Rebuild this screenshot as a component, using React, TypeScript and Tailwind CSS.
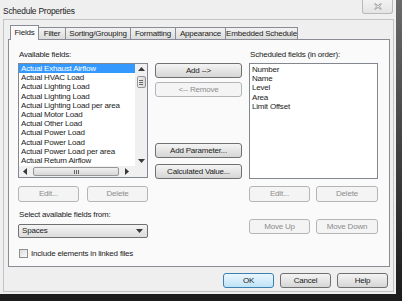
import React from 'react';

const leftFields = [
  'Actual Exhaust Airflow',
  'Actual HVAC Load',
  'Actual Lighting Load',
  'Actual Lighting Load',
  'Actual Lighting Load per area',
  'Actual Motor Load',
  'Actual Other Load',
  'Actual Power Load',
  'Actual Power Load',
  'Actual Power Load per area',
  'Actual Return Airflow',
];

const scheduled = ['Number', 'Name', 'Level', 'Area', 'Limit Offset'];

const tabs = [
  { label: 'Fields', w: 'w-[29px]', active: true },
  { label: 'Filter', w: 'w-[28px]' },
  { label: 'Sorting/Grouping', w: 'w-[66px]' },
  { label: 'Formatting', w: 'w-[46px]' },
  { label: 'Appearance', w: 'w-[51px]' },
  { label: 'Embedded Schedule', w: 'w-[73px]' },
];

interface BtnProps {
  label: string;
  className?: string;
  disabled?: boolean;
  primary?: boolean;
}

const Btn = ({ label, className = '', disabled, primary }: BtnProps) => {
  let look = 'border-[#707070] bg-linear-to-b from-[#f4f4f4] to-[#d6d6d6] text-[#1b1b1b]';
  if (disabled) look = 'border-[#b3b6b8] bg-[#f4f4f4] text-[#8c8c8c]';
  if (primary) look = 'border-[#3c7fb1] bg-linear-to-b from-[#eaf6fd] to-[#bfe3f7] text-[#1b1b1b]';
  return (
    <div className={`flex items-center justify-center rounded-[3px] border ${look} ${className}`}>
      {label}
    </div>
  );
};

const Arrow = ({ dir }: { dir: 'up' | 'down' | 'left' | 'right' }) => {
  const pts = {
    up: '0,4 3.5,0 7,4',
    down: '0,0 3.5,4 7,0',
    left: '4,0 0,3.5 4,7',
    right: '0,0 4,3.5 0,7',
  }[dir];
  const vertical = dir === 'up' || dir === 'down';
  return (
    <svg width={vertical ? 7 : 4} height={vertical ? 4 : 7} viewBox={vertical ? '0 0 7 4' : '0 0 4 7'}>
      <polygon points={pts} fill="#3a3a3a" />
    </svg>
  );
};

export default function App() {
  return (
    <div className="w-[402px] h-[301px] bg-linear-to-b from-[#6a6a6a] to-[#1c1c1c] font-['Liberation_Sans',Arial,sans-serif] text-[8px] tracking-[-0.2px] text-[#1b1b1b] overflow-hidden">
      <div className="w-[396px] h-[294px] bg-[#efefef] flex flex-col">
        {/* title bar */}
        <div className="h-[19px] flex items-start justify-between">
          <div className="pl-[3px] pt-[6px] text-[8.4px] leading-[10px]">Schedule Properties</div>
          <div className="mr-[3px] w-[31px] h-[14px] rounded-b-[3px] border border-t-0 border-[#b9b9b9] bg-linear-to-b from-[#f2f2f2] to-[#e4e4e4] flex items-center justify-center">
            <svg width="8" height="7" viewBox="0 0 8 7">
              <path d="M1 0.5 L4 2.6 L7 0.5 L7.5 1.2 L5 3.5 L7.5 5.8 L7 6.5 L4 4.4 L1 6.5 L0.5 5.8 L3 3.5 L0.5 1.2 Z" fill="none" stroke="#8a8a8a" strokeWidth="0.7" />
            </svg>
          </div>
        </div>

        {/* outer frame */}
        <div className="ml-[3px] w-[391px] h-[273px] border border-[#c4c4c4] flex flex-col">
          {/* tabs */}
          <div className="mt-[4px] pl-[6px] h-[15px] flex items-end">
            {tabs.map((t, i) => (
              <div
                key={i}
                className={`${t.w} ${i > 0 ? '-ml-px' : ''} flex items-center justify-center border border-b-0 border-[#898c95] ${
                  t.active
                    ? 'h-[15px] bg-[#fafafa] relative z-10 -mb-px'
                    : 'h-[12px] bg-linear-to-b from-[#f2f2f2] to-[#dcdcdc]'
                }`}
              >
                {t.label}
              </div>
            ))}
          </div>

          {/* panel */}
          <div className="ml-[4px] w-[382px] h-[228px] border border-[#898c95] bg-[#fafafa] flex pl-[9px] pt-[10px]">
            {/* left column */}
            <div className="w-[130px] flex flex-col">
              <div className="h-[9px] leading-[9px] pl-[1px]">Available fields:</div>
              <div className="mt-[4px] h-[115px] border border-[#828790] bg-white flex flex-col">
                <div className="flex flex-1">
                  <div className="flex-1 flex flex-col">
                    {leftFields.map((f, i) => (
                      <div
                        key={i}
                        className={`h-[9.2px] leading-[9.2px] pl-[2px] whitespace-nowrap ${
                          i === 0 ? 'bg-[#3399ff] text-white' : ''
                        }`}
                      >
                        {f}
                      </div>
                    ))}
                  </div>
                  <div className="w-[12px] bg-[#f0f0f0] flex flex-col items-center">
                    <div className="h-[10px] flex items-center">
                      <Arrow dir="up" />
                    </div>
                    <div className="mt-[2px] w-[9px] h-[12px] rounded-[2px] border border-[#969696] bg-linear-to-r from-[#f0f0f0] to-[#d8d8d8] flex flex-col items-center justify-center gap-[1px]">
                      <div className="w-[4px] h-px bg-[#666]" />
                      <div className="w-[4px] h-px bg-[#666]" />
                      <div className="w-[4px] h-px bg-[#666]" />
                    </div>
                    <div className="flex-1" />
                    <div className="h-[10px] flex items-center">
                      <Arrow dir="down" />
                    </div>
                  </div>
                </div>
                <div className="h-[11px] flex bg-[#f0f0f0]">
                  <div className="flex-1 flex items-center">
                    <div className="w-[12px] flex justify-center">
                      <Arrow dir="left" />
                    </div>
                    <div className="ml-[2px] w-[86px] h-[9px] rounded-[2px] border border-[#969696] bg-linear-to-b from-[#f0f0f0] to-[#d8d8d8] flex items-center justify-center gap-[1px]">
                      <div className="w-px h-[4px] bg-[#666]" />
                      <div className="w-px h-[4px] bg-[#666]" />
                      <div className="w-px h-[4px] bg-[#666]" />
                    </div>
                    <div className="flex-1 flex justify-center">
                      <Arrow dir="right" />
                    </div>
                  </div>
                  <div className="w-[12px]" />
                </div>
              </div>
              <div className="mt-[8px] flex justify-between">
                <Btn label="Edit..." disabled className="w-[61px] h-[16px]" />
                <Btn label="Delete" disabled className="w-[61px] h-[16px]" />
              </div>
              <div className="mt-[8px] h-[9px] leading-[9px] pl-[1px]">Select available fields from:</div>
              <div className="mt-[5px] h-[14px] rounded-[2px] border border-[#707070] bg-linear-to-b from-[#f4f4f4] to-[#dcdcdc] flex items-center justify-between pl-[3px] pr-[4px]">
                <span>Spaces</span>
                <Arrow dir="down" />
              </div>
              <div className="mt-[11px] h-[9px] flex items-center gap-[3px] pl-[1px]">
                <div className="w-[9px] h-[9px] border border-[#8e8f8f] bg-linear-to-br from-[#dcdcdc] to-[#fbfbfb]" />
                <span>Include elements in linked files</span>
              </div>
            </div>

            {/* middle column */}
            <div className="ml-[7px] w-[87px] flex flex-col pt-[13px]">
              <Btn label="Add -->" className="h-[15px]" />
              <Btn label="<-- Remove" disabled className="mt-[4px] h-[15px]" />
              <Btn label="Add Parameter..." className="mt-[46px] h-[15px]" />
              <Btn label="Calculated Value..." className="mt-[6px] h-[15px]" />
            </div>

            {/* right column */}
            <div className="ml-[7px] w-[129px] flex flex-col">
              <div className="h-[9px] leading-[9px] pl-[1px]">Scheduled fields (in order):</div>
              <div className="mt-[4px] h-[116px] border border-[#828790] bg-white flex flex-col pt-[1px]">
                {scheduled.map((s, i) => (
                  <div key={i} className="h-[9.2px] leading-[9.2px] pl-[2px]">
                    {s}
                  </div>
                ))}
              </div>
              <div className="mt-[7px] flex justify-between">
                <Btn label="Edit..." disabled className="w-[61px] h-[16px]" />
                <Btn label="Delete" disabled className="w-[62px] h-[16px]" />
              </div>
              <div className="mt-[17px] flex justify-between">
                <Btn label="Move Up" disabled className="w-[61px] h-[15px]" />
                <Btn label="Move Down" disabled className="w-[62px] h-[15px]" />
              </div>
            </div>
          </div>

          {/* dialog buttons */}
          <div className="mt-[6px] pr-[5px] flex justify-end gap-[6px]">
            <Btn label="OK" primary className="w-[51px] h-[15px]" />
            <Btn label="Cancel" className="w-[51px] h-[15px]" />
            <Btn label="Help" className="w-[51px] h-[15px]" />
          </div>
        </div>
      </div>
    </div>
  );
}
